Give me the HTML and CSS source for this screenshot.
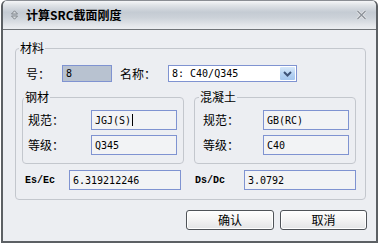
FILE: index.html
```html
<!DOCTYPE html>
<html>
<head>
<meta charset="utf-8">
<link rel="stylesheet" href="styles.css">
</head>
<body>
<div class="window">
  <div class="titlebar">
    <svg class="ticon" width="7" height="10" viewBox="0 0 7 10">
      <path d="M0.5 4 L3.5 0.8 L6.5 4 Z" fill="#d8dce0" stroke="#6f747a" stroke-width="0.8"/>
      <path d="M0.5 6 L3.5 9.2 L6.5 6 Z" fill="#d8dce0" stroke="#6f747a" stroke-width="0.8"/>
    </svg>
    <span class="title">计算SRC截面刚度</span>
    <svg class="close" width="11" height="10" viewBox="0 0 11 10">
      <path d="M1.5 1 L9.5 9 M9.5 1 L1.5 9" stroke="#e6e8ea" stroke-width="3"/>
      <path d="M1.5 1 L9.5 9 M9.5 1 L1.5 9" stroke="#8d939a" stroke-width="1.4"/>
    </svg>
  </div>
  <div class="content">
    <fieldset class="grp main">
      <legend>材料</legend>
      <div class="row1">
        <span class="lbl hao">号：</span>
        <div class="inp num">8</div>
        <span class="lbl name">名称：</span>
        <div class="combo">
          <span class="ctext">8: C40/Q345</span>
          <span class="cbtn">
            <svg width="9" height="6" viewBox="0 0 9 6"><path d="M1 1 L4.5 4.5 L8 1" fill="none" stroke="#3e5377" stroke-width="2"/></svg>
          </span>
        </div>
      </div>
      <div class="subs">
        <fieldset class="grp sub steel">
          <legend>钢材</legend>
          <div class="frow"><span class="lbl grow">规范：</span><div class="inp tx">JGJ(S)<span class="caret"></span></div></div>
          <div class="frow"><span class="lbl grow">等级：</span><div class="inp tx">Q345</div></div>
        </fieldset>
        <fieldset class="grp sub conc">
          <legend>混凝土</legend>
          <div class="frow"><span class="lbl grow">规范：</span><div class="inp tx">GB(RC)</div></div>
          <div class="frow"><span class="lbl grow">等级：</span><div class="inp tx">C40</div></div>
        </fieldset>
      </div>
      <div class="row3">
        <span class="mlbl es">Es/Ec</span>
        <div class="inp wide">6.319212246</div>
        <span class="mlbl ds">Ds/Dc</span>
        <div class="inp wide">3.0792</div>
      </div>
    </fieldset>
    <div class="btns">
      <button class="btn ok">确认</button>
      <button class="btn cancel">取消</button>
    </div>
  </div>
</div>
</body>
</html>
```

FILE: styles.css
```css
* { box-sizing: border-box; }
html, body { margin: 0; padding: 0; background: #ffffff; }
body {
  font-family: "Noto Sans CJK SC", "Noto Sans", sans-serif;
  font-size: 12px;
  color: #000;
}
.window {
  margin-left: 1px;
  width: 377px;
  height: 243px;
  border: 2px solid #5c6064;
  border-top: 1px solid #8a8e94;
  border-radius: 6px 6px 0 0;
  background: #eceef2;
  display: flex;
  flex-direction: column;
  overflow: hidden;
}
.titlebar {
  flex: none;
  height: 29px;
  display: flex;
  align-items: center;
  padding-left: 8px;
  border-bottom: 1px solid #707478;
  background: linear-gradient(#f5f6f8 0%, #dfe3e7 15%, #c4cbd3 40%, #ccd2d9 60%, #e2e5e9 85%, #eceef1 100%);
}
.ticon { flex: none; }
.title {
  margin-left: 8px;
  font-weight: bold;
  font-size: 12px;
  line-height: 14px;
  flex: 1;
}
.close { flex: none; margin-right: 9px; }
.content {
  flex: 1;
  padding-top: 11px;
  display: flex;
  flex-direction: column;
}
.grp {
  margin: 0;
  border: 1px solid #c3c7cd;
  border-radius: 4px;
  min-width: 0;
}
.grp legend {
  padding: 0 1px;
  line-height: 14px;
  font-size: 12px;
}
.main {
  margin: 0 10px 0 12px;
  padding: 10px 8px 9px 6px;
}
.main > legend { margin-left: -3px; }
.lbl { line-height: 14px; white-space: nowrap; }
.row1 {
  display: flex;
  align-items: center;
  height: 17px;
  margin-left: 4px;
}
.hao { width: 36px; }
.name { width: 48px; margin-left: 8px; }
.inp {
  border: 1px solid #7f93d1;
  background: #f2f3f5;
  font-family: "DejaVu Sans Mono", "Liberation Mono", monospace;
  font-size: 10px;
  display: flex;
  align-items: center;
  padding-left: 3px;
  white-space: nowrap;
}
.num {
  width: 50px;
  height: 17px;
  background: #b8c2d0;
}
.combo {
  width: 129px;
  height: 17px;
  border: 1px solid #7f93d1;
  background: #fff;
  display: flex;
  align-items: center;
  padding: 1px;
  font-family: "DejaVu Sans Mono", "Liberation Mono", monospace;
  font-size: 10px;
}
.ctext { flex: 1; padding-left: 2px; }
.cbtn {
  width: 15px;
  height: 13px;
  display: flex;
  align-items: center;
  justify-content: center;
  background: linear-gradient(#d7e8fa, #b2d0f2 60%, #a5c6ee);
  border-radius: 1px;
}
.subs {
  display: flex;
  gap: 10px;
  margin-top: 8px;
}
.sub { width: 162px; padding: 6px 6px 8px 5px; }
.sub > legend { margin-left: -4px; }
.conc { padding-left: 8px; }
.frow {
  display: flex;
  align-items: center;
  height: 20px;
}
.frow + .frow { margin-top: 5px; }
.grow { flex: 1; }
.tx { width: 86px; height: 20px; }
.caret {
  display: inline-block;
  width: 1px;
  height: 12px;
  background: #000;
  margin-left: 1px;
}
.row3 {
  display: flex;
  align-items: center;
  height: 20px;
  margin-top: 6px;
}
.mlbl {
  font-family: "Liberation Mono", "DejaVu Sans Mono", monospace;
  font-size: 10px;
  font-weight: bold;
}
.es { width: 44px; margin-left: 3px; }
.ds { width: 49px; margin-left: 14px; }
.wide { width: 112px; height: 20px; }
.btns {
  display: flex;
  justify-content: flex-end;
  gap: 6px;
  margin: 10px 9px 0 0;
}
.btn {
  height: 20px;
  padding: 0;
  border: 1px solid #4f5358;
  border-radius: 3px;
  background: linear-gradient(#fefefe, #f3f3f3 50%, #e3e4e6);
  box-shadow: inset 0 0 0 1px #ffffff;
  font-family: "Noto Sans CJK SC", "Noto Sans", sans-serif;
  font-size: 12px;
  line-height: 14px;
  color: #000;
}
.ok { width: 88px; }
.cancel { width: 87px; }
```
